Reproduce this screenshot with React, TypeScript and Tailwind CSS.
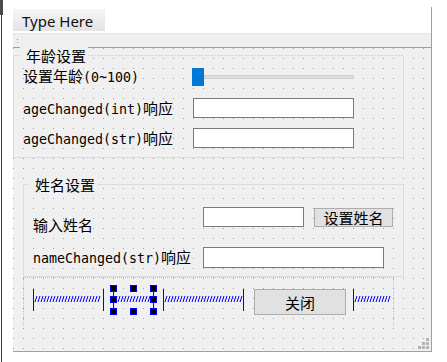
import React from "react";

const MONO = "font-['DejaVu_Sans_Mono',monospace] text-[13.3px]";
const CJK = "font-['Noto_Sans_CJK_SC',sans-serif] text-[15px]";

function Spring({ width, left = true, right = true }: { width: number; left?: boolean; right?: boolean }) {
  let d = "";
  for (let x = 2; x + 2 < width - 1; x += 3) d += `M${x} 13L${x + 2} 7`;
  return (
    <svg width={width} height={22} className="block shrink-0">
      <path d={d} stroke="#0000ff" strokeWidth={1} fill="none" />
      {left && <line x1={0.5} y1={0} x2={0.5} y2={22} stroke="#0000ff" />}
      {right && <line x1={width - 0.5} y1={0} x2={width - 0.5} y2={22} stroke="#0000ff" />}
    </svg>
  );
}

function Handle({ pos }: { pos: string }) {
  return <div className={`absolute h-[7px] w-[7px] border border-[#0000ff] bg-black ${pos}`} />;
}

function Edit({ w, h = "h-[20px]" }: { w: string; h?: string }) {
  return <input readOnly className={`${w} ${h} shrink-0 border border-[#7a7a7a] bg-white outline-none`} />;
}

export default function App() {
  return (
    <div className="flex h-[362px] w-[447px] bg-white text-black">
      {/* left edge of the designer */}
      <div className="flex w-[13px] shrink-0 flex-col">
        <div className="h-[15px] w-[3px] bg-[#4a4a4a]" />
        <div className="ml-px w-px flex-1 bg-[#3a3a3a]" />
      </div>

      <div className="mt-[7px] flex h-[345px] w-[419px] flex-col border-r border-b border-[#a0a0a0]">
        {/* menu bar */}
        <div className="h-[26px] bg-white pt-[2px]">
          <div className="h-[22px] w-[92px] bg-gradient-to-b from-[#f6f6f6] to-[#e3e3e3] pl-[9px] pt-px font-['Noto_Sans',sans-serif] text-[15px] leading-[22px] text-[#111]">
            Type Here
          </div>
        </div>

        {/* tool bar */}
        <div className="relative h-[15px] border-t border-b border-t-[#e6e6e6] border-b-[#a0a0a0] bg-[#efefef]">
          <div className="absolute left-[4px] top-[5px] h-px w-px bg-[#999]" />
          <div className="absolute left-[4px] top-[8px] h-px w-px bg-[#999]" />
        </div>

        {/* central widget */}
        <div className="relative flex flex-1 flex-col bg-[#f0f0f0] bg-[image:conic-gradient(at_1px_1px,transparent_75%,#a0a0a0_0)] bg-[length:10px_10px]">
          {/* 年龄设置 */}
          <div className="relative mt-[7px] h-[103px] w-[391px] border border-[#dcdcdc]">
            <div className={`absolute left-[6px] top-[-9px] bg-[#f0f0f0] pl-[6px] pr-[2px] leading-[17px] ${CJK}`}>年龄设置</div>
            <div className="flex flex-col pl-[9px] pt-[10px]">
              <div className="flex h-[20px] items-center">
                <div className="w-[169px] shrink-0 leading-none">
                  <span className={CJK}>设置年龄</span>
                  <span className={MONO}>(0~100)</span>
                </div>
                <div className="relative h-[20px] w-[162px]">
                  <div className="absolute left-[12px] right-0 top-[9px] h-[4px] border border-[#d0d0d0] bg-[#dedede]" />
                  <div className="absolute left-0 top-[2px] h-[18px] w-[12px] bg-[#0078d7]" />
                </div>
              </div>
              <div className="mt-[12px] flex h-[20px] items-center">
                <div className="w-[170px] shrink-0 leading-none">
                  <span className={MONO}>ageChanged(int)</span>
                  <span className={CJK}>响应</span>
                </div>
                <Edit w="w-[161px]" />
              </div>
              <div className="mt-[10px] flex h-[20px] items-center">
                <div className="w-[170px] shrink-0 leading-none">
                  <span className={MONO}>ageChanged(str)</span>
                  <span className={CJK}>响应</span>
                </div>
                <Edit w="w-[161px]" />
              </div>
            </div>
          </div>

          {/* 姓名设置 */}
          <div className="relative ml-[10px] mt-[26px] h-[93px] w-[381px] border border-[#dcdcdc]">
            <div className={`absolute left-[5px] top-[-9px] bg-[#f0f0f0] pl-[6px] pr-[2px] leading-[17px] ${CJK}`}>姓名设置</div>
            <div className="flex flex-col pl-[9px] pt-[22px]">
              <div className="flex h-[20px] items-start">
                <div className={`mt-[10px] w-[170px] shrink-0 leading-[15px] ${CJK}`}>输入姓名</div>
                <Edit w="w-[101px]" />
                <button className={`ml-[10px] mt-px h-[19px] w-[79px] border border-[#adadad] bg-[#e1e1e1] leading-none ${CJK}`}>
                  设置姓名
                </button>
              </div>
              <div className="mt-[20px] flex h-[21px] items-center">
                <div className="w-[170px] shrink-0 leading-none">
                  <span className={MONO}>nameChanged(str)</span>
                  <span className={CJK}>响应</span>
                </div>
                <Edit w="w-[181px]" h="h-[21px]" />
              </div>
            </div>
          </div>

          {/* horizontal layout with spacers */}
          <div className="ml-[10px] flex h-[49px] w-[371px] items-start border-t border-r border-l border-dotted border-[#c4c4c4] pl-[9px] pt-[11px]">
            <Spring width={71} />
            <div className="relative ml-[9px]">
              <Spring width={41} />
              <div className="absolute left-0 top-0 h-[22px] w-px bg-[#0000ff]" />
              <Handle pos="left-[-3px] top-[-4px]" />
              <Handle pos="left-[17px] top-[-4px]" />
              <Handle pos="left-[37px] top-[-4px]" />
              <Handle pos="left-[-3px] top-[7px]" />
              <Handle pos="left-[37px] top-[7px]" />
              <Handle pos="left-[-3px] top-[19px]" />
              <Handle pos="left-[17px] top-[19px]" />
              <Handle pos="left-[37px] top-[19px]" />
            </div>
            <div className="ml-[9px]">
              <Spring width={81} />
            </div>
            <button className={`ml-[10px] h-[26px] w-[92px] shrink-0 border border-[#adadad] bg-[#e1e1e1] leading-none ${CJK}`}>
              关闭
            </button>
            <div className="ml-[7px]">
              <Spring width={40} right={false} />
            </div>
          </div>

          {/* size grip */}
          <svg width={11} height={11} className="absolute bottom-[2px] right-[2px]">
            <rect x={8} y={0} width={3} height={3} fill="#b4b4b4" />
            <rect x={4} y={4} width={3} height={3} fill="#b4b4b4" />
            <rect x={8} y={4} width={3} height={3} fill="#b4b4b4" />
            <rect x={0} y={8} width={3} height={3} fill="#b4b4b4" />
            <rect x={4} y={8} width={3} height={3} fill="#b4b4b4" />
            <rect x={8} y={8} width={3} height={3} fill="#b4b4b4" />
          </svg>
        </div>
      </div>
    </div>
  );
}
